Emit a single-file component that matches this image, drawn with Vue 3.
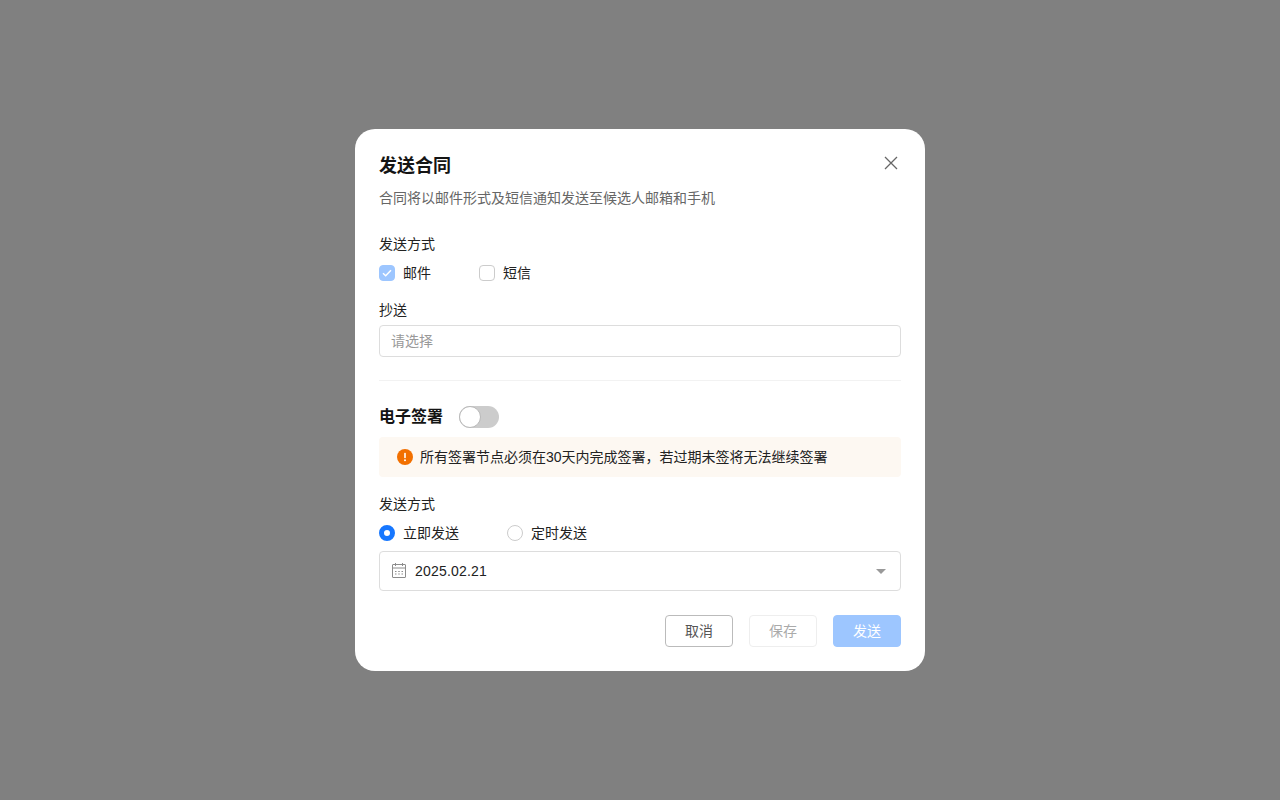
<template>
  <div class="overlay">
    <div class="modal">
      <header class="head">
        <h2 class="title">发送合同</h2>
        <svg class="close" width="16" height="16" viewBox="0 0 16 16" fill="none" stroke="#666" stroke-width="1.3"><path d="M2 2 14 14M14 2 2 14"/></svg>
      </header>
      <p class="desc">合同将以邮件形式及短信通知发送至候选人邮箱和手机</p>

      <div class="label first">发送方式</div>
      <div class="options">
        <label class="opt">
          <span class="check on">
            <svg width="10" height="8" viewBox="0 0 10 8" fill="none" stroke="#fff" stroke-width="1.5"><path d="M1 4.200 3.700 6.800 9 1.200"/></svg>
          </span>邮件
        </label>
        <label class="opt">
          <span class="check"></span>短信
        </label>
      </div>

      <div class="label cc">抄送</div>
      <div class="input">请选择</div>

      <div class="divider"></div>

      <div class="sign">
        <span class="sign-title">电子签署</span>
        <span class="switch"><span class="knob"></span></span>
      </div>
      <div class="alert">
        <svg width="16" height="16" viewBox="0 0 16 16"><circle cx="8" cy="8" r="8" fill="#f27000"/><rect x="7.200" y="3.800" width="1.600" height="5.400" rx=".6" fill="#fff"/><circle cx="8" cy="11.200" r="1" fill="#fff"/></svg>
        <span>所有签署节点必须在30天内完成签署，若过期未签将无法继续签署</span>
      </div>

      <div class="label send">发送方式</div>
      <div class="options">
        <label class="opt"><span class="radio on"></span>立即发送</label>
        <label class="opt"><span class="radio"></span>定时发送</label>
      </div>

      <div class="date">
        <svg width="16" height="16" viewBox="0 0 16 16" fill="none" stroke="#8c8c8c" stroke-width="1">
          <rect x=".5" y="1.500" width="13" height="13" rx=".5"/>
          <path d="M.5 5h13M3.500 0v3M10.500 0v3"/>
          <path d="M3 8.500h1.500M6.250 8.500h1.500M9.500 8.500h1.500M3 11h1.500M6.250 11h1.500M9.500 11h1.500"/>
        </svg>
        <span class="date-text">2025.02.21</span>
        <span class="caret"></span>
      </div>

      <footer class="foot">
        <button class="btn cancel">取消</button>
        <button class="btn save">保存</button>
        <button class="btn submit">发送</button>
      </footer>
    </div>
  </div>
</template>

<script setup>
</script>

<style>
html, body { margin: 0; padding: 0; }
</style>

<style scoped>
.overlay {
  width: 1280px;
  height: 800px;
  background: #808080;
  display: flex;
  align-items: center;
  justify-content: center;
  font-family: "Liberation Sans", "Noto Sans CJK SC", sans-serif;
  color: #1a1a1a;
}
.modal {
  box-sizing: border-box;
  width: 570px;
  height: 542px;
  background: #fff;
  border-radius: 20px;
  padding: 24px;
  display: flex;
  flex-direction: column;
  font-size: 14px;
  line-height: 20px;
}
.head { display: flex; justify-content: space-between; align-items: flex-start; }
.title { margin: 0; font-size: 18px; line-height: 26px; font-weight: 600; color: #141414; }
.close { margin: 2px 2px 0 0; }
.desc { margin: 9px 0 0; color: #666; }
.label { color: #222; }
.label.first { margin-top: 26px; }
.label.cc { margin-top: 17px; }
.label.send { margin-top: 17px; }
.options { display: flex; margin-top: 9px; }
.opt { display: flex; align-items: center; gap: 8px; margin-right: 48px; color: #222; }
.check {
  box-sizing: border-box;
  width: 16px;
  height: 16px;
  border: 1px solid #ccc;
  border-radius: 4px;
  display: flex;
  align-items: center;
  justify-content: center;
}
.check.on { background: #9dc6ff; border-color: #9dc6ff; }
.radio {
  box-sizing: border-box;
  width: 16px;
  height: 16px;
  border: 1px solid #ccc;
  border-radius: 50%;
}
.radio.on { border: 5px solid #1677ff; }
.input {
  box-sizing: border-box;
  height: 32px;
  margin-top: 5px;
  padding: 5px 11px;
  border: 1px solid #ddd;
  border-radius: 4px;
  color: #999;
}
.divider { height: 1px; margin-top: 23px; background: #f2f2f2; }
.sign { display: flex; align-items: center; height: 24px; margin-top: 24px; gap: 16px; }
.sign-title { font-size: 16px; line-height: 24px; font-weight: 600; color: #141414; }
.switch {
  width: 40px;
  height: 22px;
  border-radius: 11px;
  background: #ccc;
  position: relative;
}
.knob {
  box-sizing: border-box;
  position: absolute;
  left: 0;
  top: 0;
  width: 22px;
  height: 22px;
  border: 1px solid #b8b8b8;
  border-radius: 50%;
  background: #fff;
}
.alert {
  display: flex;
  align-items: center;
  gap: 7px;
  height: 40px;
  margin-top: 8px;
  padding: 0 18px;
  background: #fdf8f2;
  border-radius: 4px;
  color: #222;
}
.date {
  box-sizing: border-box;
  display: flex;
  align-items: center;
  height: 40px;
  margin-top: 8px;
  padding: 0 12px;
  border: 1px solid #ddd;
  border-radius: 4px;
}
.date-text { margin-left: 7px; flex: 1; color: #222; letter-spacing: .2px; }
.caret {
  width: 0;
  height: 0;
  border-left: 5px solid transparent;
  border-right: 5px solid transparent;
  border-top: 5px solid #999;
  margin-right: 2px;
}
.foot { display: flex; justify-content: flex-end; gap: 16px; margin-top: 24px; }
.btn {
  box-sizing: border-box;
  width: 68px;
  height: 32px;
  border-radius: 4px;
  font: inherit;
  padding: 0;
  background: #fff;
}
.cancel { border: 1px solid #bbb; color: #555; }
.save { border: 1px solid #eee; color: #aaa; }
.submit { border: 1px solid #9dc6ff; background: #9dc6ff; color: #fff; }
</style>
